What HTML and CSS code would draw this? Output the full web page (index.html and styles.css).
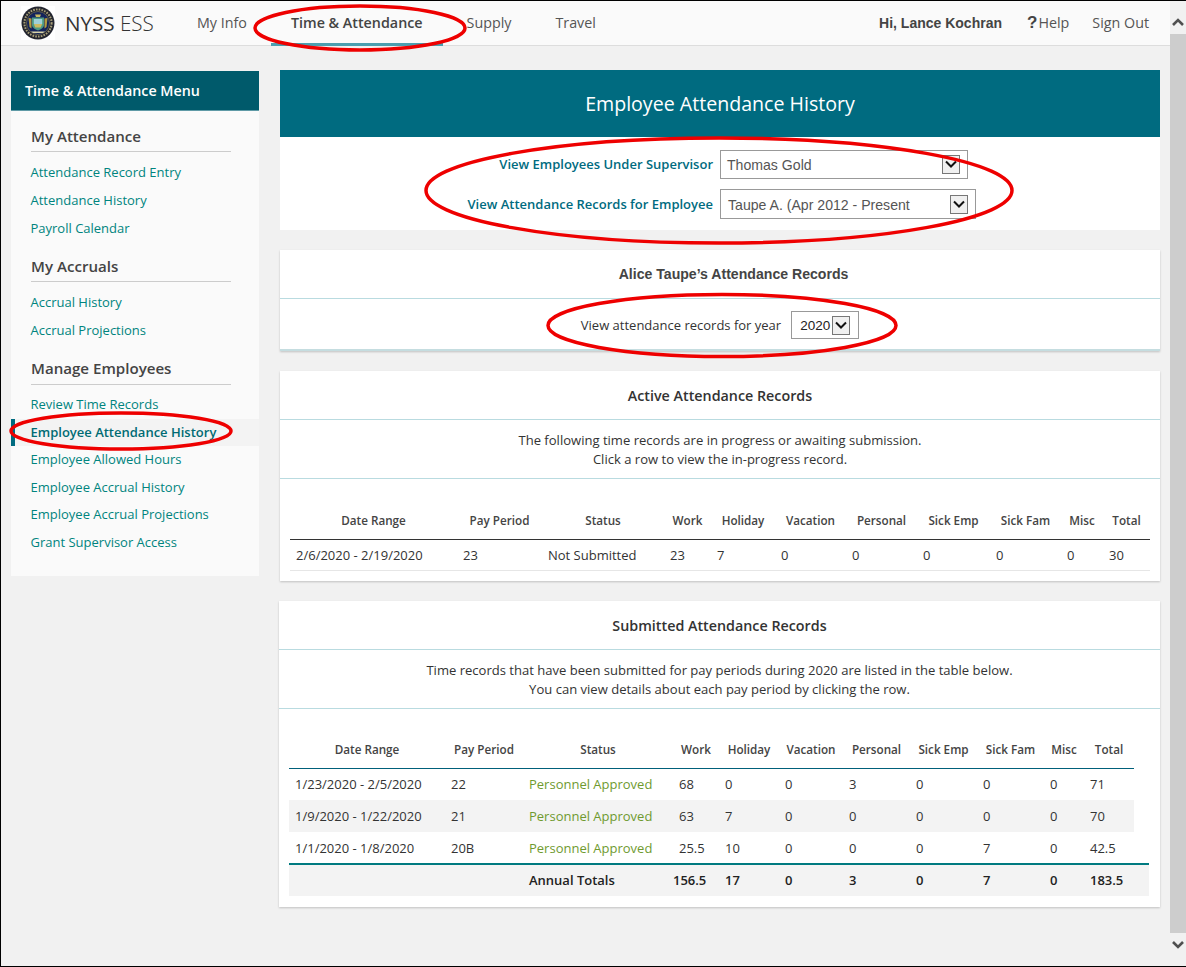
FILE: index.html
```html
<!DOCTYPE html>
<html lang="en">
<head>
  <meta charset="UTF-8">
  <title>NYSS ESS - Employee Attendance History</title>
  <link rel="stylesheet" href="styles.css">
</head>
<body>

<div class="window">
  <div class="page">
    <header class="topbar">
      <svg class="seal" viewBox="0 0 34 34" width="34" height="34">
        <rect width="34" height="34" fill="#fff"/>
        <circle cx="17" cy="17" r="16.5" fill="#23252f"/>
        <circle cx="17" cy="17" r="13.6" fill="none" stroke="#a89f78" stroke-width="2" stroke-dasharray="1.6 1.2"/>
        <circle cx="17" cy="17" r="11.5" fill="#14245c"/>
        <circle cx="17" cy="17" r="11.5" fill="none" stroke="#6d6a4e" stroke-width="0.8"/>
        <path d="M7.5 12l3 .5v10l-2-1.5zM26.5 12l-3 .5v10l2-1.5z" fill="#b39a3e"/>
        <path d="M11 11.5h12v7.5c0 2.4-3 4.4-6 5.4-3-1-6-3-6-5.4z" fill="#4c9a84"/>
        <path d="M12.8 13h8.4v5h-8.4z" fill="#9fd0d8"/>
        <path d="M12.8 18h8.4l-1.5 3.6h-5.4z" fill="#cdbb62"/>
        <path d="M14 8.5h6l-1 2.5h-4z" fill="#c9b85f"/>
        <path d="M10 25.5h14l-2 1.5h-10z" fill="#d8d2a8"/>
      </svg>
      <div class="brand">NYSS <span class="brand-light">ESS</span></div>
      <nav class="nav">
        <a class="nav-item">My Info</a>
        <a class="nav-item active">Time &amp; Attendance</a>
        <a class="nav-item">Supply</a>
        <a class="nav-item">Travel</a>
      </nav>
      <div class="user">
        <span class="user-name">Hi, Lance Kochran</span>
        <a class="help"><b>?</b>Help</a>
        <a class="signout">Sign Out</a>
      </div>
    </header>

    <div class="layout">
      <aside class="sidebar">
        <div class="menu-head">Time &amp; Attendance Menu</div>
        <div class="menu-body">
          <h4>My Attendance</h4>
          <ul>
            <li>Attendance Record Entry</li>
            <li>Attendance History</li>
            <li>Payroll Calendar</li>
          </ul>
          <h4>My Accruals</h4>
          <ul>
            <li>Accrual History</li>
            <li>Accrual Projections</li>
          </ul>
          <h4 class="manage">Manage Employees</h4>
          <ul class="manage-list">
            <li>Review Time Records</li>
            <li class="current">Employee Attendance History</li>
            <li>Employee Allowed Hours</li>
            <li>Employee Accrual History</li>
            <li>Employee Accrual Projections</li>
            <li>Grant Supervisor Access</li>
          </ul>
        </div>
      </aside>

      <main class="content">
        <div class="title-bar">Employee Attendance History</div>
        <div class="selectors">
          <div class="sel-row">
            <label>View Employees Under Supervisor</label>
            <div class="picker picker-sup"><span>Thomas Gold</span><i class="picker-btn"><svg viewBox="0 0 16 17"><path d="M3 5.5l5 5 5-5" fill="none" stroke="#111" stroke-width="2"/></svg></i></div>
          </div>
          <div class="sel-row">
            <label>View Attendance Records for Employee</label>
            <div class="picker picker-emp"><span>Taupe A. (Apr 2012 - Present</span><i class="picker-btn"><svg viewBox="0 0 16 17"><path d="M3 5.5l5 5 5-5" fill="none" stroke="#111" stroke-width="2"/></svg></i></div>
          </div>
        </div>

        <section class="card card-year">
          <h3 class="card-title arial">Alice Taupe’s Attendance Records</h3>
          <div class="year-row">
            <span>View attendance records for year</span>
            <div class="picker picker-year"><span>2020</span><i class="picker-btn"><svg viewBox="0 0 16 17"><path d="M3 5.5l5 5 5-5" fill="none" stroke="#111" stroke-width="2"/></svg></i></div>
          </div>
        </section>

        <section class="card card-active">
          <h3 class="card-title">Active Attendance Records</h3>
          <p class="card-note">The following time records are in progress or awaiting submission.<br>Click a row to view the in-progress record.</p>
          <table class="records active-table">
            <colgroup>
              <col class="a1"><col class="a2"><col class="a3"><col class="a4"><col class="a5"><col class="a6"><col class="a7"><col class="a8"><col class="a9"><col class="a10"><col class="a11">
            </colgroup>
            <thead>
              <tr><th>Date Range</th><th>Pay Period</th><th>Status</th><th>Work</th><th>Holiday</th><th>Vacation</th><th>Personal</th><th>Sick Emp</th><th>Sick Fam</th><th>Misc</th><th>Total</th></tr>
            </thead>
            <tbody>
              <tr><td>2/6/2020 - 2/19/2020</td><td>23</td><td>Not Submitted</td><td>23</td><td>7</td><td>0</td><td>0</td><td>0</td><td>0</td><td>0</td><td>30</td></tr>
            </tbody>
          </table>
        </section>

        <section class="card card-submitted">
          <h3 class="card-title">Submitted Attendance Records</h3>
          <p class="card-note">Time records that have been submitted for pay periods during 2020 are listed in the table below.<br>You can view details about each pay period by clicking the row.</p>
          <table class="records sub-table">
            <colgroup>
              <col class="s1"><col class="s2"><col class="s3"><col class="s4"><col class="s5"><col class="s6"><col class="s7"><col class="s8"><col class="s9"><col class="s10"><col class="s11">
            </colgroup>
            <thead>
              <tr><th>Date Range</th><th>Pay Period</th><th>Status</th><th>Work</th><th>Holiday</th><th>Vacation</th><th>Personal</th><th>Sick Emp</th><th>Sick Fam</th><th>Misc</th><th>Total</th></tr>
            </thead>
            <tbody>
              <tr><td>1/23/2020 - 2/5/2020</td><td>22</td><td class="approved">Personnel Approved</td><td>68</td><td>0</td><td>0</td><td>3</td><td>0</td><td>0</td><td>0</td><td>71</td></tr>
              <tr class="alt"><td>1/9/2020 - 1/22/2020</td><td>21</td><td class="approved">Personnel Approved</td><td>63</td><td>7</td><td>0</td><td>0</td><td>0</td><td>0</td><td>0</td><td>70</td></tr>
              <tr class="last"><td>1/1/2020 - 1/8/2020</td><td>20B</td><td class="approved">Personnel Approved</td><td>25.5</td><td>10</td><td>0</td><td>0</td><td>0</td><td>7</td><td>0</td><td>42.5</td></tr>
            </tbody>
          </table>
          <table class="records totals-table">
            <colgroup>
              <col class="s1"><col class="s2"><col class="s3"><col class="s4"><col class="s5"><col class="s6"><col class="s7"><col class="s8"><col class="s9"><col class="s10"><col class="s11-wide">
            </colgroup>
            <tbody>
              <tr><td></td><td></td><td>Annual Totals</td><td class="pull">156.5</td><td>17</td><td>0</td><td>3</td><td>0</td><td>7</td><td>0</td><td>183.5</td></tr>
            </tbody>
          </table>
        </section>
      </main>
    </div>
  </div>

  <div class="scrollbar">
    <svg viewBox="0 0 16 16" width="16" height="16"><path d="M3 11l5-5 5 5" fill="none" stroke="#505050" stroke-width="2.6"/></svg>
    <div class="thumb"></div>
    <svg viewBox="0 0 16 16" width="16" height="16"><path d="M3 5l5 5 5-5" fill="none" stroke="#505050" stroke-width="2.6"/></svg>
  </div>

  <!-- red markup someone drew over the screenshot -->
  <svg class="markup" viewBox="0 0 1186 967" width="1186" height="967">
    <ellipse cx="360" cy="28" rx="105" ry="22"/>
    <ellipse cx="719" cy="190.5" rx="293" ry="52.5"/>
    <ellipse cx="722" cy="325.5" rx="174" ry="31"/>
    <ellipse cx="121" cy="431" rx="110" ry="18"/>
  </svg>
</div>

</body>
</html>
```

FILE: styles.css
```css
* {
  box-sizing: border-box;
}
body {
  margin: 0;
  font-family: 'Open Sans', sans-serif;
  font-size: 13px;
  color: #333;
  background-color: #f1f1f1;
}
.window {
  position: relative;
  display: flex;
  width: 1186px;
  height: 967px;
  border: 1px solid #000;
  border-right: none;
  overflow: hidden;
}
.page {
  flex: 1;
  min-width: 0;
  background-color: #f1f1f1;
}

/* top bar */
.topbar {
  display: flex;
  align-items: center;
  height: 45px;
  padding-left: 20px;
  background-color: #fafafa;
  border-bottom: 1px solid #ddd;
}
.seal {
  flex: none;
  margin-top: -1px;
}
.brand {
  margin-left: 10px;
  width: 112px;
  font-size: 20.6px;
  color: #333;
}
.brand-light {
  font-weight: 300;
}
.nav {
  display: flex;
  gap: 4px;
  height: 45px;
}
.nav-item {
  padding: 0 20px;
  font-size: 14.3px;
  line-height: 44px;
  color: #555;
}
.nav-item.active {
  font-weight: 600;
  color: #444;
  border-bottom: 3px solid #4a9fb0;
}
.user {
  display: flex;
  align-items: center;
  margin-left: auto;
  padding-right: 21px;
  font-size: 14.3px;
  line-height: 20px;
  color: #555;
}
.user-name {
  font-family: 'Liberation Sans', sans-serif;
  font-size: 14px;
  font-weight: bold;
  color: #444;
}
.help {
  margin-left: 25px;
}
.help b {
  font-family: 'Liberation Sans', sans-serif;
  font-size: 17px;
  line-height: 1;
  margin-right: 1px;
  color: #444;
}
.signout {
  margin-left: 23px;
}

.layout {
  display: flex;
  align-items: flex-start;
  padding: 24px 10px 0 10px;
  gap: 21px;
}

/* sidebar */
.sidebar {
  flex: none;
  width: 248px;
  margin-top: 1px;
  background-color: #fafafa;
}
.menu-head {
  height: 40px;
  padding-left: 14px;
  font-size: 14.3px;
  font-weight: 600;
  line-height: 39px;
  color: #fff;
  background-color: #005a6b;
  border-bottom: 1px solid #5f9aa6;
}
.menu-body {
  padding: 14px 0 19px;
}
.menu-body h4 {
  margin: 0 28px 0 20px;
  padding-bottom: 4px;
  font-size: 15.1px;
  font-weight: 600;
  line-height: 22px;
  color: #444;
  border-bottom: 1px solid #ccc;
}
.menu-body h4.manage {
  padding-bottom: 5px;
}
.menu-body ul {
  list-style: none;
  margin: 6px 0 12.8px;
  padding: 0;
}
.menu-body li {
  height: 28px;
  padding-left: 19.5px;
  line-height: 28px;
  color: #00847e;
}
.menu-body ul.manage-list {
  margin: 6.5px 0 0;
}
.manage-list li {
  height: 27.6px;
  line-height: 27.6px;
}
.menu-body li.current {
  padding-left: 15.5px;
  font-weight: 600;
  color: #006b73;
  background-color: #f3f3f3;
  border-left: 4px solid #006b80;
}

/* main column */
.content {
  flex: 1;
  min-width: 0;
}
.title-bar {
  height: 67px;
  font-size: 19.6px;
  line-height: 68px;
  text-align: center;
  color: #fff;
  background-color: #006b80;
}
.selectors {
  height: 93px;
  padding-top: 12px;
  background-color: #fff;
}
.sel-row {
  display: flex;
  align-items: center;
  height: 30px;
  margin-bottom: 10px;
}
.sel-row label {
  width: 440px;
  padding-right: 7px;
  font-weight: 600;
  text-align: right;
  color: #006b80;
}
.picker {
  display: flex;
  align-items: center;
  justify-content: space-between;
  font-family: 'Liberation Sans', sans-serif;
  font-size: 14.1px;
  color: #555;
  background-color: #fff;
  border: 1px solid #999;
}
.picker span {
  padding-top: 2px;
}
.picker-sup {
  width: 248px;
  height: 29px;
  padding: 0 7px 0 6px;
}
.picker-emp {
  width: 256px;
  height: 30px;
  padding: 0 7px;
}
.picker-year {
  width: 68px;
  height: 28px;
  padding: 0 8px;
  font-size: 13.5px;
  color: #222;
}
.picker-year span {
  padding-top: 0;
}
.picker-btn {
  display: block;
  flex: none;
  width: 18px;
  height: 19px;
  background-color: #f0f0f0;
  border: 1px solid #777;
}
.picker-btn svg {
  display: block;
  width: 16px;
  height: 17px;
}

/* cards */
.card {
  margin-top: 20px;
  background-color: #fff;
  box-shadow: 0 1px 2px rgba(0, 0, 0, 0.2);
}
.card-year {
  height: 101px;
  border-bottom: 2px solid #c5dde0;
}
.card-active {
  height: 210px;
}
.card-submitted {
  height: 306px;
  margin-left: -1px;
}
.card-title {
  height: 49px;
  margin: 0;
  padding-top: 1px;
  font-size: 14.3px;
  font-weight: 600;
  line-height: 48px;
  text-align: center;
  color: #333;
  border-bottom: 1px solid #b9dbe0;
}
.card-title.arial {
  padding-top: 0;
  padding-left: 27px;
  font-family: 'Liberation Sans', sans-serif;
  font-size: 14.1px;
  font-weight: bold;
  color: #444;
}
.year-row {
  display: flex;
  align-items: center;
  justify-content: center;
  gap: 10px;
  height: 52px;
}
.card-note {
  height: 59px;
  margin: 0;
  padding-top: 11px;
  font-size: 13.05px;
  line-height: 19px;
  text-align: center;
  border-bottom: 1px solid #b9dbe0;
}

/* tables */
.records {
  table-layout: fixed;
  border-collapse: collapse;
  color: #333;
}
.records th {
  padding: 0;
  font-size: 11.7px;
  font-weight: 600;
  text-align: center;
  color: #444;
}
.records td {
  padding: 0 0 0 6px;
  white-space: nowrap;
}
.active-table {
  width: 860px;
  margin: 22px 0 0 10px;
}
.active-table th {
  height: 38px;
  border-bottom: 1px solid #333;
}
.active-table td {
  height: 31px;
  border-bottom: 1px solid #e6e6e6;
}
.a1 { width: 167px; }
.a2 { width: 85px; }
.a3 { width: 122px; }
.a4 { width: 47px; }
.a5 { width: 64px; }
.a6 { width: 71px; }
.a7 { width: 71px; }
.a8 { width: 73px; }
.a9 { width: 71px; }
.a10 { width: 42px; }
.a11 { width: 47px; }
.sub-table {
  width: 845px;
  margin: 21px 0 0 10px;
}
.sub-table th {
  height: 38px;
  border-bottom: 1px solid #00607a;
}
.sub-table td {
  height: 32px;
}
.sub-table tr.alt td {
  background-color: #f3f3f3;
}
.sub-table tr.last td {
  height: 31px;
}
.approved {
  color: #6f9a2f;
}
.totals-table {
  width: 860px;
  margin-left: 10px;
  border-top: 2px solid #007a80;
  background-color: #f3f3f3;
}
.totals-table td {
  height: 32px;
  padding-bottom: 2px;
  font-weight: 600;
  color: #222;
}
.totals-table td.pull {
  padding-left: 0;
  padding-right: 15px;
  text-align: right;
  overflow: visible;
}
.s1 { width: 156px; }
.s2 { width: 78px; }
.s3 { width: 150px; }
.s4 { width: 46px; }
.s5 { width: 60px; }
.s6 { width: 64px; }
.s7 { width: 67px; }
.s8 { width: 67px; }
.s9 { width: 67px; }
.s10 { width: 40px; }
.s11 { width: 50px; }
.s11-wide { width: 65px; }

/* window scrollbar */
.scrollbar {
  display: flex;
  flex: none;
  flex-direction: column;
  align-items: center;
  width: 16px;
  padding-top: 13px;
  background-color: #f1f1f1;
}
.thumb {
  width: 16px;
  height: 899px;
  margin: 4px 0 4px;
  background-color: #cdcdcd;
}

.markup {
  position: absolute;
  top: -1px;
  left: -1px;
  pointer-events: none;
}
.markup ellipse {
  fill: none;
  stroke: #ee0000;
  stroke-width: 3.5;
}
```
